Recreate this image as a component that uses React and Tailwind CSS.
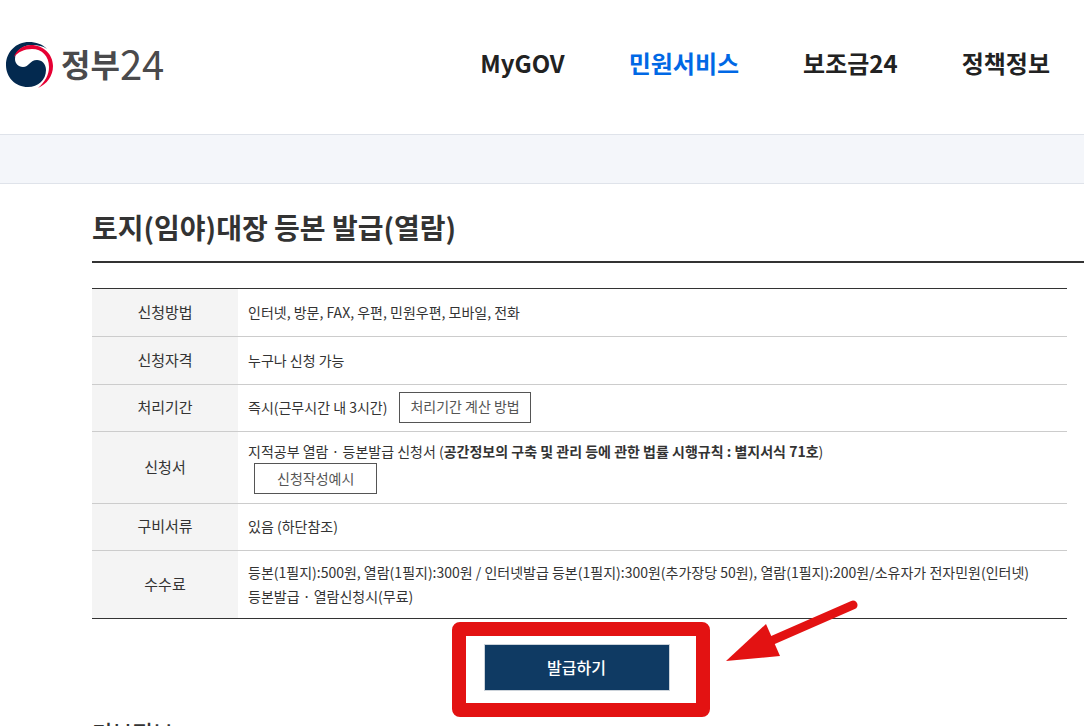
const menus = [
    { label: "MyGOV" },
    { label: "민원서비스", active: true },
    { label: "보조금24" },
    { label: "정책정보" },
]

const rows = [
    { title: "신청방법", height: "h-12", content: "인터넷, 방문, FAX, 우편, 민원우편, 모바일, 전화" },
    { title: "신청자격", height: "h-12", content: "누구나 신청 가능" },
    {
        title: "처리기간",
        height: "h-[47px]",
        content: (
            <div className="flex items-center gap-3">
                <span>즉시(근무시간 내 3시간)</span>
                <OutlineButton label="처리기간 계산 방법" />
            </div>
        ),
    },
    {
        title: "신청서",
        height: "h-[72px]",
        content: (
            <div className="flex flex-col items-start">
                <span>
                    지적공부 열람 · 등본발급 신청서 (<b>공간정보의 구축 및 관리 등에 관한 법률 시행규칙 : 별지서식 71호</b>)
                </span>
                <div className="pl-1.5">
                    <OutlineButton label="신청작성예시" wide />
                </div>
            </div>
        ),
    },
    { title: "구비서류", height: "h-[47px]", content: "있음 (하단참조)" },
    {
        title: "수수료",
        height: "h-[68px]",
        content:
            "등본(1필지):500원, 열람(1필지):300원 / 인터넷발급 등본(1필지):300원(추가장당 50원), 열람(1필지):200원/소유자가 전자민원(인터넷) 등본발급 · 열람신청시(무료)",
    },
]

function OutlineButton({ label, wide }) {
    return (
        <button
            type="button"
            className={`h-[31px] border border-[#555] bg-white pb-0.5 text-sm leading-none text-[#555] ${wide ? "px-[22px]" : "px-2.5"}`}
        >
            {label}
        </button>
    )
}

function Logo() {
    return (
        <a href="#" className="flex items-center gap-2 text-[#4a4a4c]">
            <svg viewBox="0 0 47 46" className="h-[46px] w-[47px]" aria-hidden="true">
                <path
                    d="M41 7 C36 2 30 0 23 0 C10 0 0 10 0 23 C0 35 9 45 22 45 C32 45 40 38 40 28 C40 22 36 18 31 18 C24 18 23 25 17 25 C12 25 9 21 9 17 C9 9 17 3 26 3 C32 3 37 4 41 7 Z"
                    fill="#03294f"
                />
                <path
                    d="M8 15 C10 8 17 3 25 3 C37 3 47 12 47 24 C47 34 41 42 32 46 C39 40 43 33 43 25 C43 14 36 7 26 7 C18 7 12 10 8 15 Z"
                    fill="#e60033"
                />
            </svg>
            <span className="flex items-center pb-1 leading-none">
                <span className="text-[32px] font-bold">정부</span>
                <span className="text-[40px]">24</span>
            </span>
        </a>
    )
}

function InfoTable() {
    return (
        <table className="w-full border-collapse border-y border-[#333] leading-6 text-[#333]">
            <tbody className="divide-y divide-[#ccc]">
                {rows.map((row) => (
                    <tr key={row.title} className={row.height}>
                        <th scope="row" className="w-[146px] bg-[#f4f4f4] pb-0.5 text-[15px] font-normal">{row.title}</th>
                        <td className="break-keep pb-0.5 pl-2.5 text-sm leading-6">{row.content}</td>
                    </tr>
                ))}
            </tbody>
        </table>
    )
}

export default function App() {
    return (
        <div className="h-screen overflow-hidden bg-white font-['Noto_Sans_CJK_KR',sans-serif]">
            <header className="flex h-[134px] items-center justify-between pb-1 pl-1.5 pr-[34px]">
                <Logo />
                <nav className="flex gap-16 pb-1 text-2xl font-bold">
                    {menus.map((menu) => (
                        <a key={menu.label} href="#" className={menu.active ? "text-[#0068e5]" : "text-[#222]"}>
                            {menu.label}
                        </a>
                    ))}
                </nav>
            </header>

            <div className="h-[50px] border-y border-[#dfe3ea] bg-[#f4f6fa]" />

            <main className="pl-[92px]">
                <h1 className="flex h-[79px] items-center border-b-2 border-[#333] pt-2 text-[28px] font-bold text-[#333]">
                    토지(임야)대장 등본 발급(열람)
                </h1>

                <div className="mt-[25px] pr-[17px]">
                    <InfoTable />

                    <div className="mt-[25px] flex justify-center pr-1.5">
                        <div className="relative">
                            <button
                                type="button"
                                className="h-[47px] w-[186px] border border-[#ccd3da] bg-[#0f3a63] pb-0.5 font-medium text-white"
                            >
                                발급하기
                            </button>

                            {/* highlight box and arrow */}
                            <div className="pointer-events-none absolute -bottom-[26px] -left-8 -right-10 -top-[22px] rounded-lg border-[14px] border-[#e31212]" />
                            <svg viewBox="0 0 134 64" className="pointer-events-none absolute -top-11 left-[242px] h-16 w-[134px]" aria-hidden="true">
                                <path d="M47 40 L127 5" stroke="#e31212" strokeWidth="9" strokeLinecap="round" />
                                <path d="M0 61 L40 24 L54 56 Z" fill="#e31212" />
                            </svg>
                        </div>
                    </div>
                </div>

                <h2 className="mt-6 text-[22px] font-medium text-[#333]">기본정보</h2>
            </main>
        </div>
    )
}
